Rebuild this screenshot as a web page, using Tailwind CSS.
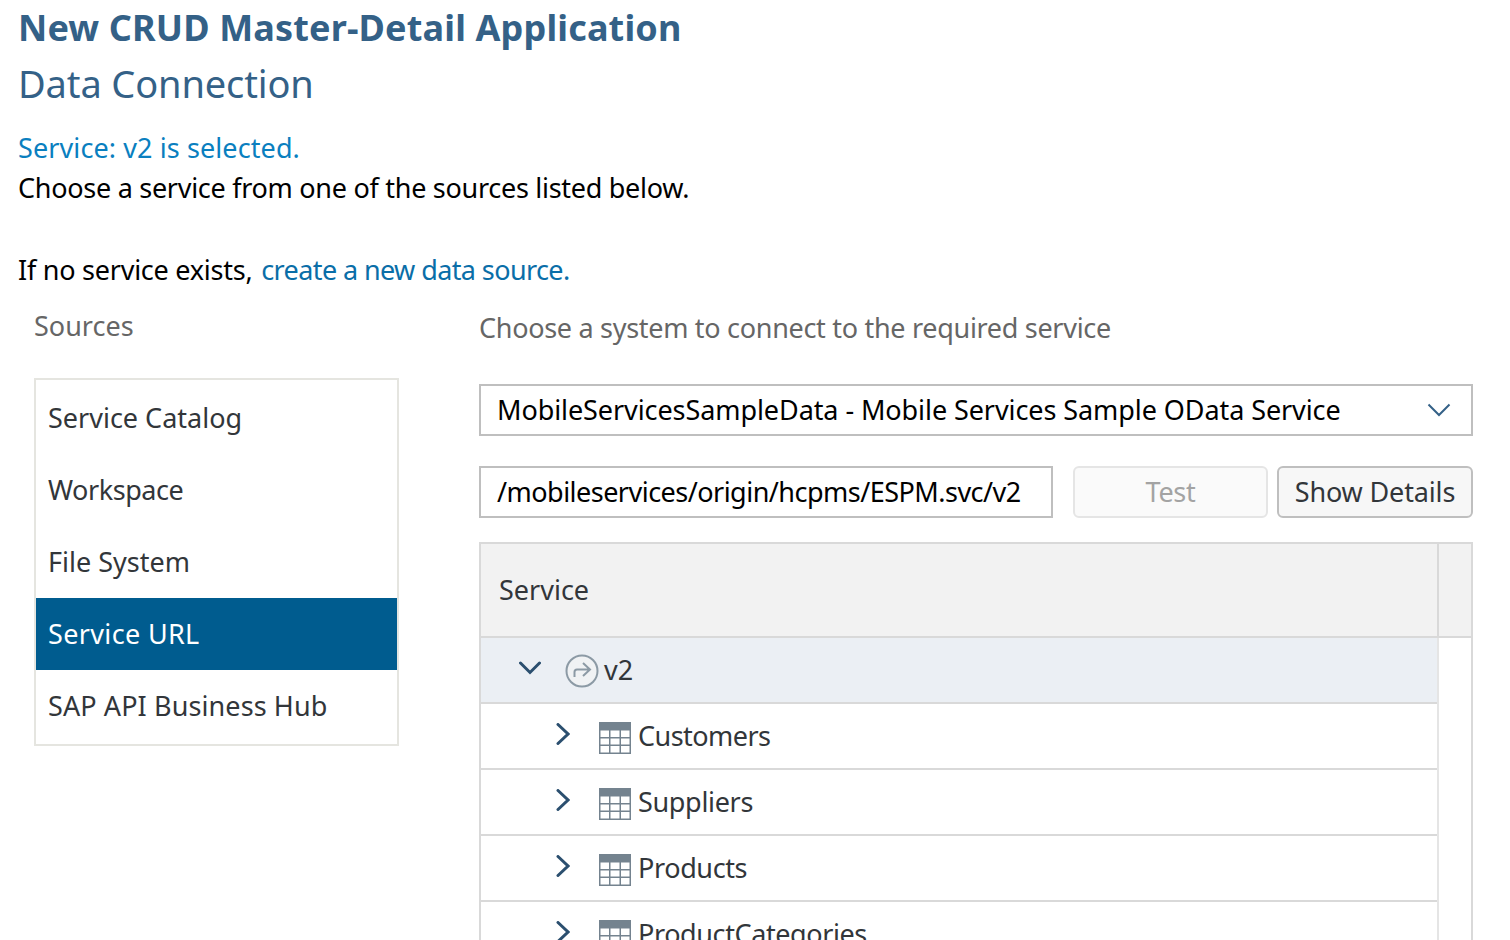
<!DOCTYPE html>
<html lang="en">
<head>
    <meta charset="UTF-8">
    <title>New CRUD Master-Detail Application</title>
    <script src="https://cdn.jsdelivr.net/npm/@tailwindcss/browser@4"></script>
</head>
<body class="bg-white font-['Noto_Sans',sans-serif] overflow-hidden">
    <div class="h-[940px] overflow-hidden pl-[18px] pr-[37px]">
        <h1 class="h-[56px] text-[36px] leading-[56px] font-bold tracking-[0.15px] text-[#346187]">New CRUD Master-Detail Application</h1>
        <h2 class="h-[56px] text-[38px] leading-[54px] tracking-[-0.13px] text-[#346187]">Data Connection</h2>
        <div class="pt-[16px] text-[27px] leading-[40px]">
            <p class="text-[#0a7fbf] tracking-[0.1px]">Service: v2 is selected.</p>
            <p class="text-black tracking-[-0.28px]">Choose a service from one of the sources listed below.</p>
            <p class="mt-[42px] text-black tracking-[-0.24px]">If no service exists, <a class="ml-[2px] text-[#0a6ea8] tracking-[-0.6px]">create a new data source.</a></p>
        </div>

        <div class="flex mt-[16px]">
            <div class="w-[365px] ml-[16px] mr-[80px] shrink-0">
                <div class="h-[40px] text-[27px] leading-[40px] text-[#666666]">Sources</div>
                <ul class="mt-[32px] border-2 border-[#e5e5e0] py-[2px] text-[27px] text-[#32363a]">
                    <li class="h-[72px] leading-[72px] px-[12px]">Service Catalog</li>
                    <li class="h-[72px] leading-[72px] px-[12px] tracking-[-0.45px]">Workspace</li>
                    <li class="h-[72px] leading-[72px] px-[12px]">File System</li>
                    <li class="h-[72px] leading-[72px] px-[12px] tracking-[0.35px] bg-[#005c8f] text-white">Service URL</li>
                    <li class="h-[72px] leading-[72px] px-[12px] tracking-[0.1px]">SAP API Business Hub</li>
                </ul>
            </div>

            <div class="w-[994px]">
                <div class="h-[40px] mt-[2px] text-[27px] leading-[40px] tracking-[-0.3px] text-[#666666]">Choose a system to connect to the required service</div>
                <div class="mt-[36px] h-[52px] border-2 border-[#bfbfbf] flex items-center justify-between pl-[16px] pr-[20px] text-[27px] tracking-[-0.08px] text-black">
                    <span>MobileServicesSampleData - Mobile Services Sample OData Service</span>
                    <svg class="w-[24px] h-[14px]" viewBox="0 0 24 14" fill="none" stroke="#346187" stroke-width="2"><path d="M1.500 1.500 12 12 22.500 1.500"/></svg>
                </div>
                <div class="mt-[30px] flex h-[52px] text-[27px]">
                    <div class="w-[574px] border-2 border-[#bfbfbf] pl-[16px] leading-[48px] tracking-[-0.52px] text-black">/mobileservices/origin/hcpms/ESPM.svc/v2</div>
                    <button class="ml-[20px] w-[195px] border-2 border-[#e5e5e5] rounded-[6px] bg-[#fafafa] tracking-[-0.3px] text-[#a3a3a3]">Test</button>
                    <button class="ml-[9px] w-[196px] border-2 border-[#bfbfbf] rounded-[6px] bg-[#f7f7f7] tracking-[-0.15px] text-[#32363a]">Show Details</button>
                </div>

                <div class="mt-[24px] border-2 border-b-0 border-[#d9d9d9] text-[27px] text-[#32363a]">
                    <div class="flex h-[94px] bg-[#f2f2f2] border-b-2 border-[#d9d9d9]">
                        <div class="flex-1 pl-[18px] leading-[92px]">Service</div>
                        <div class="w-[34px] border-l-2 border-[#d9d9d9]"></div>
                    </div>
                    <div class="mr-[32px] border-r-2 border-[#e5e5e5]">
                        <div class="flex items-center h-[66px] bg-[#ebeff4] border-b-2 border-[#d9d9d9] pl-[38px]">
                            <svg class="w-[22px] h-[14px] -mt-[4px]" viewBox="0 0 22 14" fill="none" stroke="#2b4f6f" stroke-width="3" stroke-linecap="round"><path d="M1.500 2 11 11.500 20.500 2"/></svg>
                            <svg class="ml-[24px] w-[34px] h-[34px] mt-[2px]" viewBox="0 0 34 34" fill="none" stroke="#8c9aa5" stroke-width="2"><circle cx="17" cy="17" r="15.500" fill="#f0f2f4"/><path d="M9.500 23v-5a2.500 2.500 0 0 1 2.500-2.500h13M18 9l7 6.500-7 6.500"/></svg>
                            <span class="ml-[5px]">v2</span>
                        </div>
                        <div class="flex items-center h-[66px] border-b-2 border-[#d9d9d9] pl-[75px]">
                            <svg class="w-[14px] h-[22px] -mt-[4px]" viewBox="0 0 14 22" fill="none" stroke="#2b4f6f" stroke-width="3" stroke-linecap="round"><path d="M2 1.500 12 11 2 20.500"/></svg>
                            <svg class="ml-[29px] w-[32px] h-[32px] mt-[4px]" viewBox="0 0 32 32"><rect width="32" height="32" fill="#74838f"/><path fill="#fff" d="M1.500 8.500h8.500v6.500H1.500zM11.500 8.500h9v6.500h-9zM22 8.500h8.500v6.500H22zM1.500 16.500h8.500v6H1.500zM11.500 16.500h9v6h-9zM22 16.500h8.500v6H22zM1.500 24h8.500v6.500H1.500zM11.500 24h9v6.500h-9zM22 24h8.500v6.500H22z"/></svg>
                            <span class="ml-[7px] tracking-[-0.55px]">Customers</span>
                        </div>
                        <div class="flex items-center h-[66px] border-b-2 border-[#d9d9d9] pl-[75px]">
                            <svg class="w-[14px] h-[22px] -mt-[4px]" viewBox="0 0 14 22" fill="none" stroke="#2b4f6f" stroke-width="3" stroke-linecap="round"><path d="M2 1.500 12 11 2 20.500"/></svg>
                            <svg class="ml-[29px] w-[32px] h-[32px] mt-[4px]" viewBox="0 0 32 32"><rect width="32" height="32" fill="#74838f"/><path fill="#fff" d="M1.500 8.500h8.500v6.500H1.500zM11.500 8.500h9v6.500h-9zM22 8.500h8.500v6.500H22zM1.500 16.500h8.500v6H1.500zM11.500 16.500h9v6h-9zM22 16.500h8.500v6H22zM1.500 24h8.500v6.500H1.500zM11.500 24h9v6.500h-9zM22 24h8.500v6.500H22z"/></svg>
                            <span class="ml-[7px] tracking-[-0.33px]">Suppliers</span>
                        </div>
                        <div class="flex items-center h-[66px] border-b-2 border-[#d9d9d9] pl-[75px]">
                            <svg class="w-[14px] h-[22px] -mt-[4px]" viewBox="0 0 14 22" fill="none" stroke="#2b4f6f" stroke-width="3" stroke-linecap="round"><path d="M2 1.500 12 11 2 20.500"/></svg>
                            <svg class="ml-[29px] w-[32px] h-[32px] mt-[4px]" viewBox="0 0 32 32"><rect width="32" height="32" fill="#74838f"/><path fill="#fff" d="M1.500 8.500h8.500v6.500H1.500zM11.500 8.500h9v6.500h-9zM22 8.500h8.500v6.500H22zM1.500 16.500h8.500v6H1.500zM11.500 16.500h9v6h-9zM22 16.500h8.500v6H22zM1.500 24h8.500v6.500H1.500zM11.500 24h9v6.500h-9zM22 24h8.500v6.500H22z"/></svg>
                            <span class="ml-[7px] tracking-[-0.38px]">Products</span>
                        </div>
                        <div class="flex items-center h-[66px] border-b-2 border-[#d9d9d9] pl-[75px]">
                            <svg class="w-[14px] h-[22px] -mt-[4px]" viewBox="0 0 14 22" fill="none" stroke="#2b4f6f" stroke-width="3" stroke-linecap="round"><path d="M2 1.500 12 11 2 20.500"/></svg>
                            <svg class="ml-[29px] w-[32px] h-[32px] mt-[4px]" viewBox="0 0 32 32"><rect width="32" height="32" fill="#74838f"/><path fill="#fff" d="M1.500 8.500h8.500v6.500H1.500zM11.500 8.500h9v6.500h-9zM22 8.500h8.500v6.500H22zM1.500 16.500h8.500v6H1.500zM11.500 16.500h9v6h-9zM22 16.500h8.500v6H22zM1.500 24h8.500v6.500H1.500zM11.500 24h9v6.500h-9zM22 24h8.500v6.500H22z"/></svg>
                            <span class="ml-[7px] tracking-[-0.4px]">ProductCategories</span>
                        </div>
                    </div>
                </div>
            </div>
        </div>
    </div>
</body>
</html>
